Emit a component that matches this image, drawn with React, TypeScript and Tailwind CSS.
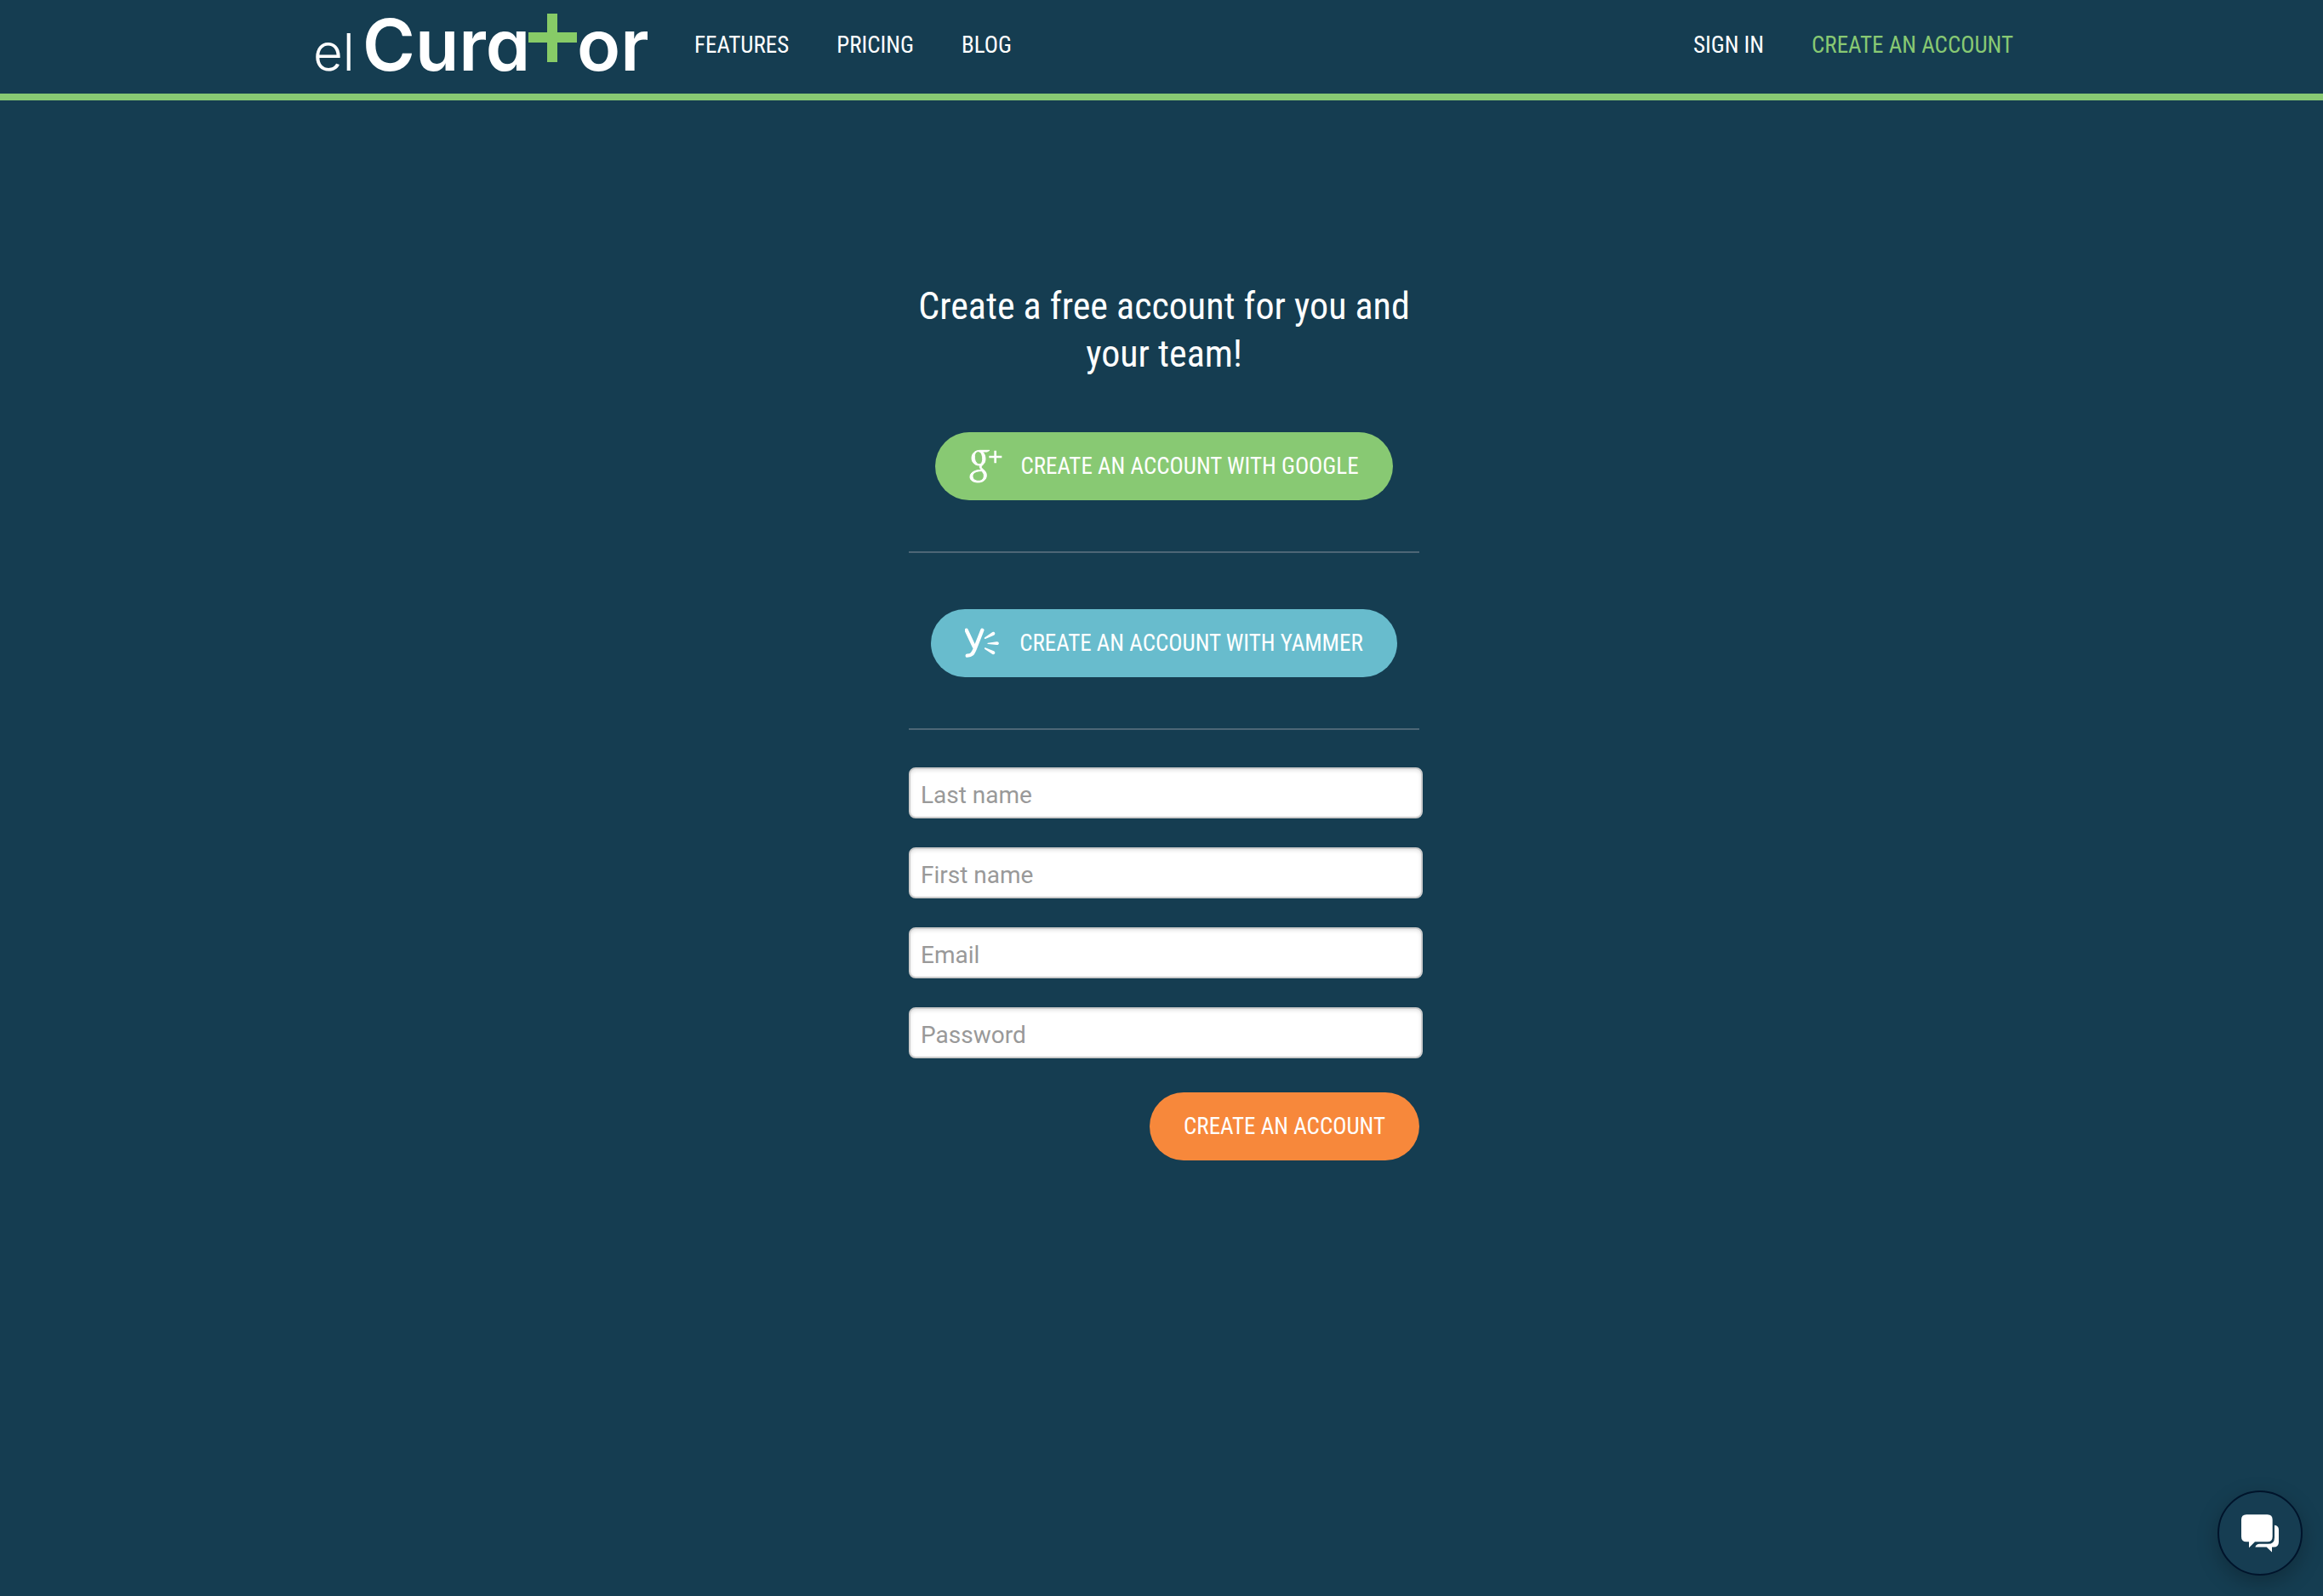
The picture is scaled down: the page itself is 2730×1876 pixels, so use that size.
import type { ReactNode } from "react";

function Logo() {
  return (
    <svg
      viewBox="0 0 396 84"
      className="h-[84px] w-[396px] overflow-visible"
      role="img"
      aria-label="elCurator"
    >
      <g fill="#ffffff" className="font-[Inter,sans-serif]">
        <text x="-2" y="74" className="text-[60px] font-light">
          el
        </text>
        <text x="56" y="74" className="text-[84px] font-semibold [font-feature-settings:'cv11']">
          Cura
        </text>
        <text x="308" y="74" className="text-[84px] font-semibold">
          or
        </text>
      </g>
      <path d="M273 7h12v22h23v12h-23v23h-12V41h-22V29h22z" fill="#87cb67" />
    </svg>
  );
}

function GooglePlusIcon() {
  return (
    <svg viewBox="62 20 120 120" className="size-10 shrink-0" fill="#ffffff" aria-hidden="true">
      <path
        fillRule="evenodd"
        stroke="#ffffff"
        strokeWidth="3"
        d="M134 24H100C82 24 71 36 71 51C71 67 82 77 96 77L100 77C98 81 98 84 102 89C103 91 104 92 105 93C82 93 65 102 65 118C65 130 78 137 93 137C112 137 123 126 123 112C123 102 118 97 111 91C106 87 105 85 105 82C105 79 108 77 112 73C117 68 119 62 119 54C119 43 115 35 109 29H125ZM94 28C104 28 109 41 109 54C109 66 105 73 98 73C87 73 81 60 81 47C81 35 86 28 94 28ZM105 97C111 101 114 107 114 113C114 124 107 132 95 132C82 132 74 125 74 115C74 104 85 97 105 97Z"
      />
      <path d="M150 25h8v18h19v8h-19v18h-8V51h-18v-8h18z" />
    </svg>
  );
}

function YammerIcon() {
  return (
    <svg viewBox="42 34 120 120" className="size-10 shrink-0" fill="#ffffff" aria-hidden="true">
      <path
        d="M47 48L75 108M103 48L78 112C70 132 66 138 50 138"
        fill="none"
        stroke="#ffffff"
        strokeWidth="13"
        strokeLinecap="round"
        strokeLinejoin="round"
      />
      <path d="M111 78C110 76 111 75 112 74L139 55C147 51 152 62 144 66L114 79Q112 80 111 78Z" />
      <path d="M121 95Q121 93 123 93L154 89C164 88 164 101 154 100L123 97Q121 97 121 95Z" />
      <path d="M111 111Q112 109 114 110L144 122C152 126 147 137 139 133L112 115Q110 113 111 111Z" />
    </svg>
  );
}

function ChatIcon() {
  return (
    <svg viewBox="132 150 132 134" className="h-[45px] w-11" fill="#ffffff" aria-hidden="true">
      <path d="M150 150H224Q242 150 242 168V228Q242 246 224 246H180L159 267V246H150Q132 246 132 228V168Q132 150 150 150Z" />
      <path d="M249 188Q264 190 264 204V247Q264 265 246 265H240V283L221 265H181Q185 254 196 254H226Q249 254 249 231Z" />
    </svg>
  );
}

function NavLink({ children, accent = false }: { children: ReactNode; accent?: boolean }) {
  return (
    <a href="#" className={accent ? "text-[#88c973]" : "text-white"}>
      {children}
    </a>
  );
}

const pill =
  "flex h-20 items-center rounded-[40px] px-10 font-['Roboto_Condensed',sans-serif] text-[27px] leading-8 text-white whitespace-nowrap";

function Field({ id, label, type }: { id: string; label: string; type: string }) {
  return (
    <input
      id={id}
      name={id}
      type={type}
      aria-label={label}
      placeholder={label}
      className="block h-[60px] w-[604px] max-w-none rounded-lg border-2 border-[#cccccc] bg-white px-3 pt-1 font-[Roboto,sans-serif] text-[28px] text-[#555555] shadow-[inset_0_2px_4px_rgba(0,0,0,0.1)] placeholder:text-[#999999]"
    />
  );
}

export default function App() {
  return (
    <div className="flex min-h-screen flex-col bg-[#153d51] text-white">
      <header className="border-b-8 border-[#88c973] pl-1.5">
        <div className="mx-auto flex h-[110px] w-full max-w-[1996px] items-center justify-between font-['Roboto_Condensed',sans-serif] text-[27px] leading-8">
          <div className="flex items-center gap-[50px]">
            <a href="#" className="-mt-2">
              <Logo />
            </a>
            <nav className="flex gap-14 pb-1">
              <NavLink>FEATURES</NavLink>
              <NavLink>PRICING</NavLink>
              <NavLink>BLOG</NavLink>
            </nav>
          </div>
          <nav className="flex gap-14 pb-1">
            <NavLink>SIGN IN</NavLink>
            <NavLink accent>CREATE AN ACCOUNT</NavLink>
          </nav>
        </div>
      </header>

      <main className="flex grow flex-col items-center pt-[214px] pl-1.5">
        <div className="flex w-[600px] flex-col items-center">
          <h1 className="text-center font-['Roboto_Condensed',sans-serif] text-[44px] leading-14">
            Create a free account for you and your team!
          </h1>
          <button type="button" className={`${pill} mt-16 gap-5 bg-[#88c973]`}>
            <GooglePlusIcon />
            CREATE AN ACCOUNT WITH GOOGLE
          </button>
          <hr className="mt-15 w-full border-t-2 border-[#4d6676]" />
          <button type="button" className={`${pill} mt-[66px] gap-6 bg-[#68bccd]`}>
            <YammerIcon />
            CREATE AN ACCOUNT WITH YAMMER
          </button>
          <hr className="mt-15 w-full border-t-2 border-[#4d6676]" />
          <form className="mt-11 flex w-full flex-col gap-[34px]" onSubmit={(e) => e.preventDefault()}>
            <Field id="last-name" label="Last name" type="text" />
            <Field id="first-name" label="First name" type="text" />
            <Field id="email" label="Email" type="email" />
            <Field id="password" label="Password" type="password" />
            <button type="submit" className={`${pill} mt-1.5 self-end bg-[#f7883b]`}>
              CREATE AN ACCOUNT
            </button>
          </form>
        </div>
      </main>

      <button
        type="button"
        aria-label="Open chat"
        className="fixed right-6 bottom-6 flex size-[100px] items-center justify-center rounded-full border-2 border-[#00142b] bg-[#163d52] shadow-[0_8px_24px_rgba(0,0,0,0.25)]"
      >
        <ChatIcon />
      </button>
    </div>
  );
}
